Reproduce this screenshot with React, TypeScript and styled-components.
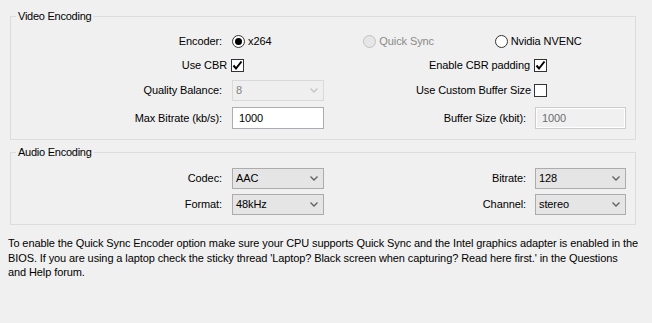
import React from 'react'
import styled, { createGlobalStyle } from 'styled-components'

const GlobalStyle = createGlobalStyle`
  html, body {
    margin: 0;
    padding: 0;
    background: #f0f0f0;
  }
  body {
    font-family: "Liberation Sans", Arial, sans-serif;
    font-size: 11px;
    letter-spacing: -0.1px;
    color: #000;
  }
`

const Page = styled.div`
  width: 652px;
  height: 323px;
  padding-top: 9px;
  box-sizing: border-box;
  overflow: hidden;
`

const Group = styled.fieldset<{ $gap?: number }>`
  margin: ${({ $gap }) => $gap ?? 0}px 0 0 10px;
  width: 626px;
  box-sizing: border-box;
  border: 1px solid #dcdcdc;
  padding: 6px 9px 7px 0;
  min-width: 0;
`

const GroupTitle = styled.legend`
  margin-left: 5px;
  padding: 0 2px;
  line-height: 14px;
  letter-spacing: -0.25px;
`

const FormGrid = styled.div<{ $rows: string }>`
  display: grid;
  grid-template-columns: 221px 92px 211px 91px;
  grid-template-rows: ${({ $rows }) => $rows};
  align-items: center;
`

const Label = styled.label<{ $pad?: number }>`
  justify-self: end;
  padding-right: ${({ $pad }) => $pad ?? 10}px;
  white-space: nowrap;
`

const RadioGroup = styled.div`
  grid-column: 2 / 5;
  display: flex;
  align-items: center;
`

const RadioItem = styled.label<{ $disabled?: boolean }>`
  width: 132px;
  display: flex;
  align-items: center;
  gap: 3px;
  color: ${({ $disabled }) => ($disabled ? '#8a8a8a' : '#000')};
`

const RadioDot = styled.span<{ $checked?: boolean; $disabled?: boolean }>`
  width: 13px;
  height: 13px;
  box-sizing: border-box;
  border-radius: 50%;
  border: 1px solid ${({ $disabled }) => ($disabled ? '#c2c2c2' : '#333')};
  background: ${({ $disabled }) => ($disabled ? '#e6e6e6' : '#fff')};
  display: flex;
  align-items: center;
  justify-content: center;
  &::after {
    content: '';
    display: ${({ $checked }) => ($checked ? 'block' : 'none')};
    width: 7px;
    height: 7px;
    border-radius: 50%;
    background: #000;
  }
`

const CheckBox = styled.span`
  width: 13px;
  height: 13px;
  box-sizing: border-box;
  border: 1px solid #333;
  background: #fff;
  margin-left: -1px;
  display: flex;
  align-items: center;
  justify-content: center;
`

const Combo = styled.div<{ $disabled?: boolean }>`
  height: 21px;
  box-sizing: border-box;
  border: 1px solid ${({ $disabled }) => ($disabled ? '#d9d9d9' : '#acacac')};
  background: ${({ $disabled }) => ($disabled ? '#efefef' : '#e5e5e5')};
  color: ${({ $disabled }) => ($disabled ? '#838383' : '#000')};
  display: flex;
  align-items: center;
  justify-content: space-between;
  padding: 0 5px 0 3px;
`

const TextBox = styled.div<{ $disabled?: boolean }>`
  height: 22px;
  box-sizing: border-box;
  border: 1px solid ${({ $disabled }) => ($disabled ? '#cccccc' : '#abadb3')};
  background: ${({ $disabled }) => ($disabled ? '#f0f0f0' : '#fff')};
  box-shadow: ${({ $disabled }) => ($disabled ? 'inset 0 0 0 1px #fff' : 'none')};
  color: ${({ $disabled }) => ($disabled ? '#6d6d6d' : '#000')};
  display: flex;
  align-items: center;
  padding-left: 6px;
`

const Note = styled.p`
  margin: 11px 0 0 8px;
  width: 640px;
  line-height: 14.5px;
  white-space: nowrap;
`

function Check({ checked }: { checked?: boolean }) {
  return (
    <CheckBox>
      {checked && (
        <svg width="11" height="11" viewBox="0 0 11 11">
          <polyline points="1.5,5.5 4,8.5 9.5,1.5" fill="none" stroke="#000" strokeWidth="2" />
        </svg>
      )}
    </CheckBox>
  )
}

function Select({ value, disabled }: { value: string; disabled?: boolean }) {
  return (
    <Combo $disabled={disabled}>
      <span>{value}</span>
      <svg width="8" height="5" viewBox="0 0 8 5">
        <polyline points="0.5,0.5 4,4 7.5,0.5" fill="none" stroke={disabled ? '#c4c4c4' : '#606060'} strokeWidth="1.3" />
      </svg>
    </Combo>
  )
}

export default function App() {
  return (
    <>
      <GlobalStyle />
      <Page>
        <Group>
          <GroupTitle>Video Encoding</GroupTitle>
          <FormGrid $rows="24px 24px 26px 29px">
            <Label>Encoder:</Label>
            <RadioGroup>
              <RadioItem><RadioDot $checked />x264</RadioItem>
              <RadioItem $disabled><RadioDot $disabled />Quick Sync</RadioItem>
              <RadioItem><RadioDot />Nvidia NVENC</RadioItem>
            </RadioGroup>

            <Label $pad={5}>Use CBR</Label>
            <Check checked />
            <Label $pad={5}>Enable CBR padding</Label>
            <Check checked />

            <Label>Quality Balance:</Label>
            <Select value="8" disabled />
            <Label $pad={4}>Use Custom Buffer Size</Label>
            <Check />

            <Label>Max Bitrate (kb/s):</Label>
            <TextBox>1000</TextBox>
            <Label $pad={9}>Buffer Size (kbit):</Label>
            <TextBox $disabled>1000</TextBox>
          </FormGrid>
        </Group>

        <Group $gap={5}>
          <GroupTitle>Audio Encoding</GroupTitle>
          <FormGrid $rows="26px 26px">
            <Label>Codec:</Label>
            <Select value="AAC" />
            <Label $pad={9}>Bitrate:</Label>
            <Select value="128" />

            <Label>Format:</Label>
            <Select value="48kHz" />
            <Label $pad={9}>Channel:</Label>
            <Select value="stereo" />
          </FormGrid>
        </Group>

        <Note>
          To enable the Quick Sync Encoder option make sure your CPU supports Quick Sync and the Intel graphics adapter is enabled in the
          <br />
          BIOS. If you are using a laptop check the sticky thread 'Laptop? Black screen when capturing? Read here first.' in the Questions
          <br />
          and Help forum.
        </Note>
      </Page>
    </>
  )
}
